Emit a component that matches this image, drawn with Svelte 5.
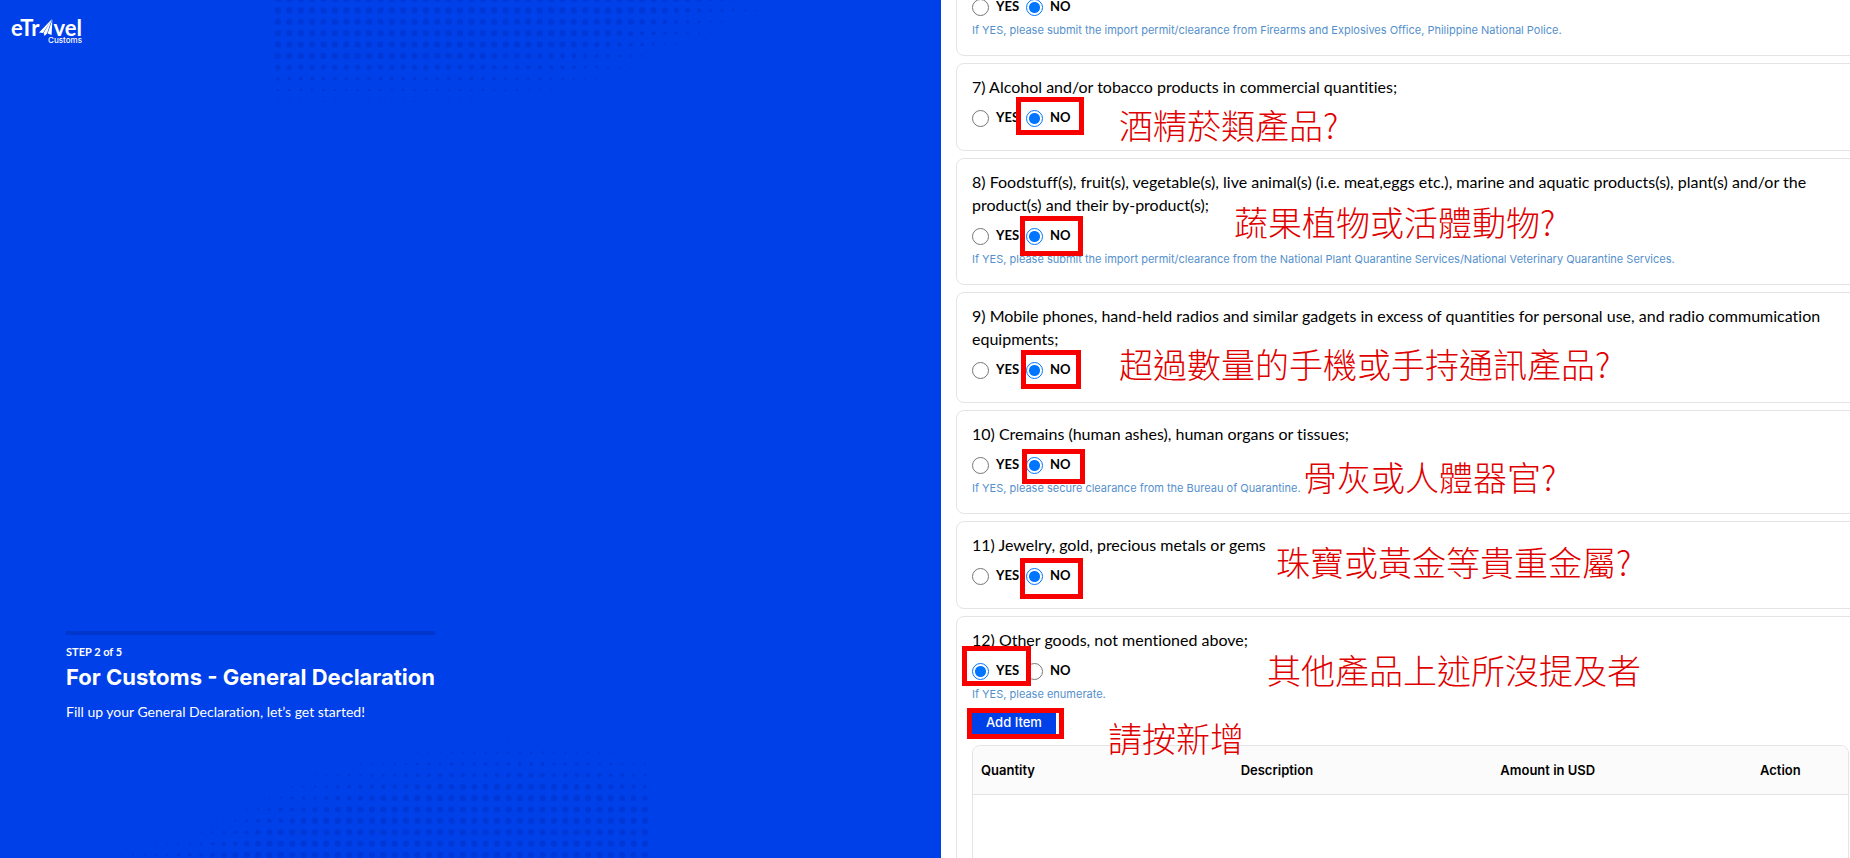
<script>
  const questions = [
    { text: '6) Firearms, ammunitions and explosives;', answer: 'NO', hint: 'If YES, please submit the import permit/clearance from Firearms and Explosives Office, Philippine National Police.' },
    { text: '7) Alcohol and/or tobacco products in commercial quantities;', answer: 'NO', note: '酒精菸類產品?', noteAt: [162, 39], box: [59, 33, 68, 38] },
    { text: '8) Foodstuff(s), fruit(s), vegetable(s), live animal(s) (i.e. meat,eggs etc.), marine and aquatic products(s), plant(s) and/or the product(s) and their by-product(s);', answer: 'NO', hint: 'If YES, please submit the import permit/clearance from the National Plant Quarantine Services/National Veterinary Quarantine Services.', note: '蔬果植物或活體動物?', noteAt: [277, 41], box: [63, 57, 63, 40] },
    { text: '9) Mobile phones, hand-held radios and similar gadgets in excess of quantities for personal use, and radio commumication equipments;', answer: 'NO', note: '超過數量的手機或手持通訊產品?', noteAt: [162, 49], box: [64, 57, 60, 39] },
    { text: '10) Cremains (human ashes), human organs or tissues;', answer: 'NO', hint: 'If YES, please secure clearance from the Bureau of Quarantine.', note: '骨灰或人體器官?', noteAt: [346, 44], box: [65, 38, 63, 35] },
    { text: '11) Jewelry, gold, precious metals or gems', answer: 'NO', note: '珠寶或黃金等貴重金屬?', noteAt: [319, 18], box: [63, 36, 63, 41] },
    { text: '12) Other goods, not mentioned above;', answer: 'YES', hint: 'If YES, please enumerate.', note: '其他產品上述所沒提及者', noteAt: [310, 31], box: [5, 29, 69, 40], items: true },
  ];
  const columns = ['Quantity', 'Description', 'Amount in USD', 'Action'];

  const pitch = 11.38;
  const topEdge = [[278, 118], [480, 117], [575, 104], [610, 93], [655, 72], [688, 58], [735, 35], [765, 24], [820, 12], [860, 2]];
  const bottomEdge = [[90, 135], [115, 122], [155, 111], [190, 100], [215, 88], [245, 72], [277, 54], [300, 44], [335, 32], [395, 20], [450, 12], [540, 6], [600, 14], [645, 25]];

  function along(points, x) {
    for (let i = 1; i < points.length; i++) {
      const [x0, y0] = points[i - 1];
      const [x1, y1] = points[i];
      if (x <= x1) return y0 + ((x - x0) / (x1 - x0)) * (y1 - y0);
    }
    return points[points.length - 1][1];
  }

  function halftone(startX, dx, columnsCount, startY, dy, depth) {
    const dots = [];
    for (let c = 0; c < columnsCount; c++) {
      for (let r = 0; r < 12; r++) {
        const x = startX + c * dx;
        const y = startY + r * dy;
        const radius = Math.min(3.1, depth(x, y) / 20);
        if (radius > 0.3) dots.push({ x, y, radius });
      }
    }
    return dots;
  }

  const topDots = halftone(278, pitch, 51, -1, pitch, (x, y) => along(topEdge, x) - y);
  const bottomDots = halftone(645, -pitch, 48, 135, -pitch, (x, y) => y - along(bottomEdge, x));
</script>

<main>
  <aside>
    <svg class="dots top" aria-hidden="true">
      {#each topDots as d}<circle cx={d.x} cy={d.y} r={d.radius} />{/each}
    </svg>
    <svg class="dots bottom" aria-hidden="true">
      {#each bottomDots as d}<circle cx={d.x} cy={d.y} r={d.radius} />{/each}
    </svg>
    <a class="logo" href="#home">
      <span class="word">eTr<svg viewBox="0 0 14 17" aria-hidden="true"><path d="M13 0 L0 13.5 L4 14 Z M13 0 L4.6 14 L5.6 17 L8 14.6 Z M13.4 0.5 L8.6 14.5 L12.6 16 Z" /></svg>vel</span>
      <small>Customs</small>
    </a>
    <section class="step">
      <div class="bar"></div>
      <p class="count">STEP 2 of 5</p>
      <h1>For Customs - General Declaration</h1>
      <p class="lead">Fill up your General Declaration, let’s get started!</p>
    </section>
  </aside>

  <form>
    {#each questions as q, i}
      <fieldset>
        <p class="question">{q.text}</p>
        <div class="answers">
          {#each ['YES', 'NO'] as choice}
            <label><input type="radio" name="q{i}" value={choice} checked={q.answer === choice} />{choice}</label>
          {/each}
        </div>
        {#if q.hint}<p class="hint">{q.hint}</p>{/if}
        {#if q.items}
          <div class="add">
            <button type="button">Add Item</button>
            <span class="frame around"></span>
            <span class="note beside">請按新增</span>
          </div>
          <div class="table">
            <table>
              <thead><tr>{#each columns as c}<th scope="col">{c}</th>{/each}</tr></thead>
              <tbody><tr><td colspan="4"></td></tr></tbody>
            </table>
          </div>
        {/if}
        {#if q.note}
          <span class="frame" style="left:{q.box[0]}px;top:{q.box[1]}px;width:{q.box[2]}px;height:{q.box[3]}px"></span>
          <span class="note" style="left:{q.noteAt[0]}px;top:{q.noteAt[1]}px">{q.note}</span>
        {/if}
      </fieldset>
    {/each}
  </form>
</main>

<style>
  :global(body) { margin: 0; background: #fff; }
  main {
    display: grid;
    grid-template-columns: 941fr 909fr;
    grid-template-rows: 100vh;
    height: 100vh;
    overflow: hidden;
    font-family: Lato, "Noto Sans CJK TC", sans-serif;
    font-variant-ligatures: none;
    color: #000;
  }
  p, h1 { margin: 0; }
  aside {
    position: relative;
    display: flex;
    flex-direction: column;
    justify-content: space-between;
    align-items: flex-start;
    background: #0040e8;
    color: #fff;
    overflow: hidden;
  }
  .dots { position: absolute; left: 0; width: 100%; height: 138px; fill: #0038d8; }
  .dots.top { top: 0; }
  .dots.bottom { bottom: 0; }
  .logo {
    position: relative;
    display: flex;
    flex-direction: column;
    align-items: flex-end;
    padding: 19px 0 0 11px;
    color: #fff;
    text-decoration: none;
  }
  .word { display: flex; align-items: center; font: 700 22px/16px Lato, sans-serif; }
  .word svg { width: 14px; height: 17px; fill: #fff; }
  .logo small { font: 500 8px/8px Inter, sans-serif; }
  .step { position: relative; padding: 0 0 136px 66px; }
  .bar { height: 4px; background: #0036cc; }
  .count { margin-top: 8px; font-size: 11px; line-height: 18px; font-weight: 700; }
  h1 { font: 700 22px/32px Inter, sans-serif; }
  .lead { margin-top: 9px; font-size: 14px; line-height: 20px; }

  form {
    display: flex;
    flex-direction: column;
    gap: 7px;
    min-width: 0;
    margin: -48px -15px 0 15px;
  }
  fieldset {
    position: relative;
    flex: none;
    min-width: 0;
    margin: 0;
    padding: 11px 15px 17px;
    border: 1px solid #e4e4e6;
    border-radius: 8px;
  }
  .question { margin-bottom: 2px; font-size: 16px; line-height: 23px; }
  .answers { display: flex; gap: 7px; height: 33px; align-items: center; }
  label { display: flex; align-items: center; gap: 7px; font-size: 13px; line-height: 20px; font-weight: 700; }
  input {
    appearance: none;
    box-sizing: border-box;
    width: 17px;
    height: 17px;
    margin: 3px 0 0;
    border: 1px solid #767676;
    border-radius: 50%;
    background: #fff;
  }
  input:checked {
    border-color: #0075ff;
    background: radial-gradient(circle, #0075ff 5px, #fff 6px);
  }
  .hint { font: 400 11px/16px Inter, sans-serif; color: #5590cc; }
  .add { position: relative; margin-top: 10px; }
  button {
    display: block;
    padding: 0 14px 2px;
    border: 0;
    background: #0040e8;
    color: #fff;
    font: 500 13px/20px Inter, sans-serif;
  }
  .table {
    margin-top: 11px;
    height: 200px;
    border: 1px solid #e4e4e6;
    border-radius: 8px;
    overflow: hidden;
  }
  table { width: 100%; border-collapse: collapse; table-layout: fixed; }
  th {
    height: 48px;
    padding: 0 8px;
    background: #fbfbfb;
    border-bottom: 1px solid #e4e4e6;
    font: 600 13px/20px Inter, sans-serif;
    text-align: left;
  }
  th:last-child { width: 80px; }
  .frame { position: absolute; box-sizing: border-box; border: 5px solid #f80000; }
  .around { left: -5px; top: -4px; width: 97px; height: 31px; }
  .note {
    position: absolute;
    font-family: "Noto Sans CJK TC", sans-serif;
    font-size: 34px;
    line-height: 44px;
    font-weight: 300;
    color: #e00000;
    white-space: nowrap;
  }
  .beside { left: 136px; top: 4px; }
</style>
